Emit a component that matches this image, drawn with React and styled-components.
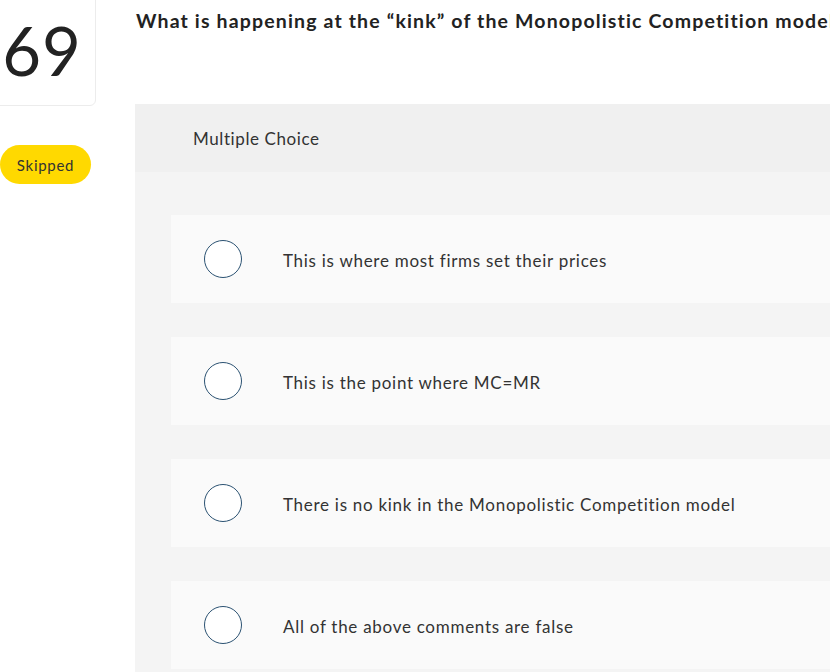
import React from "react";
import styled, { createGlobalStyle } from "styled-components";

const Global = createGlobalStyle`
  html, body { margin: 0; padding: 0; background: #fff; overflow: hidden; }
  body { font-family: Lato, "Open Sans", sans-serif; color: #333; }
`;

const Page = styled.div`
  display: flex;
  width: 830px;
  height: 672px;
  overflow: hidden;
`;

const Side = styled.div`
  flex: 0 0 135px;
  display: flex;
  flex-direction: column;
  align-items: flex-start;
`;

const NumberCard = styled.div`
  margin-left: -20px;
  margin-top: -10px;
  width: 116px;
  height: 116px;
  border: 1px solid #ececec;
  border-radius: 6px;
  box-sizing: border-box;
  display: flex;
  align-items: center;
  justify-content: center;
  padding-left: 8px;
  padding-top: 4px;
  font-size: 67px;
  letter-spacing: 1px;
  color: #222;
  font-weight: 400;
`;

const Badge = styled.div`
  margin-top: 39px;
  width: 91px;
  height: 39px;
  border-radius: 20px;
  background: #ffd900;
  color: #333;
  font-size: 15px;
  letter-spacing: 0.7px;
  display: flex;
  align-items: center;
  justify-content: center;
`;

const Main = styled.div`
  flex: 1;
  min-width: 0;
  display: flex;
  flex-direction: column;
`;

const Title = styled.h1`
  margin: 0;
  height: 104px;
  padding-top: 9px;
  box-sizing: border-box;
  font-size: 19.5px;
  font-weight: 700;
  letter-spacing: 1.15px;
  color: #222;
  white-space: nowrap;
  padding-left: 1px;
`;

const Panel = styled.div`
  flex: 1;
  background: #f4f4f4;
  display: flex;
  flex-direction: column;
`;

const PanelHeader = styled.div`
  height: 68px;
  background: #f0f0f0;
  display: flex;
  align-items: center;
  padding-left: 58px;
  font-size: 17px;
  letter-spacing: 0.6px;
  color: #333;
`;

const Options = styled.div`
  display: flex;
  flex-direction: column;
  gap: 34px;
  padding: 43px 0 0 36px;
`;

const Option = styled.div`
  height: 88px;
  background: #fafafa;
  display: flex;
  align-items: center;
  padding-left: 33px;
  gap: 41px;
`;

const Radio = styled.span`
  width: 38px;
  height: 38px;
  box-sizing: border-box;
  border-radius: 50%;
  border: 1.5px solid #2b5272;
  background: #fff;
  flex: 0 0 auto;
`;

const Label = styled.span`
  font-size: 17px;
  letter-spacing: 0.72px;
  color: #333;
  padding-top: 2px;
`;

const choices = [
  "This is where most firms set their prices",
  "This is the point where MC=MR",
  "There is no kink in the Monopolistic Competition model",
  "All of the above comments are false",
];

export default function App() {
  return (
    <Page>
      <Global />
      <Side>
        <NumberCard>69</NumberCard>
        <Badge>Skipped</Badge>
      </Side>
      <Main>
        <Title>What is happening at the “kink” of the Monopolistic Competition model?</Title>
        <Panel>
          <PanelHeader>Multiple Choice</PanelHeader>
          <Options>
            {choices.map((c) => (
              <Option key={c}>
                <Radio />
                <Label>{c}</Label>
              </Option>
            ))}
          </Options>
        </Panel>
      </Main>
    </Page>
  );
}
